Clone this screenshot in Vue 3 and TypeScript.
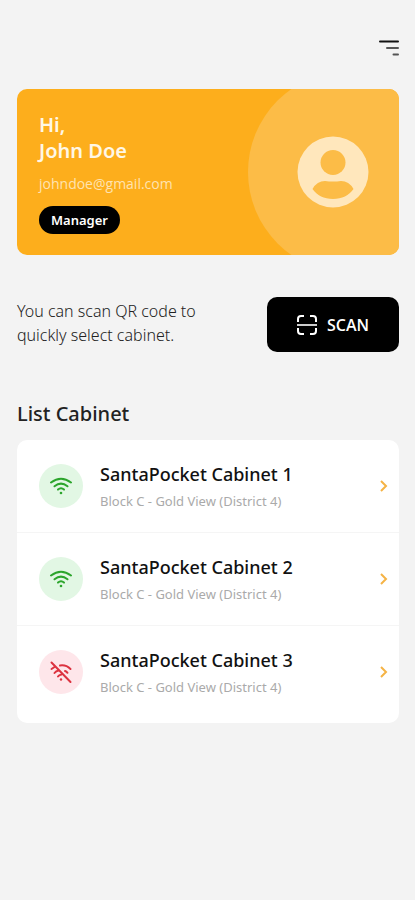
<script setup lang="ts">
interface Cabinet {
  id: number
  name: string
  location: string
  online: boolean
}

const user = { name: 'John Doe', email: 'johndoe@gmail.com', role: 'Manager' }

const cabinets: Cabinet[] = [
  { id: 1, name: 'SantaPocket Cabinet 1', location: 'Block C - Gold View (District 4)', online: true },
  { id: 2, name: 'SantaPocket Cabinet 2', location: 'Block C - Gold View (District 4)', online: true },
  { id: 3, name: 'SantaPocket Cabinet 3', location: 'Block C - Gold View (District 4)', online: false },
]
</script>

<template>
  <main class="page">
    <header class="topbar">
      <button class="menu" type="button" aria-label="Menu">
        <svg width="20" height="18" viewBox="0 0 20 18" fill="none" stroke-width="2" stroke-linecap="round">
          <path d="M1 2.5H19" stroke="#111" />
          <path d="M8 9H19" stroke="#555" />
          <path d="M14.500 15.500H19" stroke="#555" />
        </svg>
      </button>
    </header>

    <section class="profile">
      <div class="details">
        <h1 class="greeting">Hi,<br />{{ user.name }}</h1>
        <p class="email">{{ user.email }}</p>
        <span class="role">{{ user.role }}</span>
      </div>
      <div class="halo"></div>
      <svg class="avatar" width="72" height="72" viewBox="0 0 72 72" aria-hidden="true">
        <circle cx="36" cy="36" r="35.500" fill="#ffe7bc" />
        <circle cx="36" cy="26.500" r="12.500" fill="#fcbc47" />
        <path d="M15.500 53Q20 45 28 45Q36 46 44 45Q52 45 56.500 53C52 59.500 45 63 36 63S20 59.500 15.500 53Z" fill="#fcbc47" />
      </svg>
    </section>

    <section class="scan-row">
      <p class="hint">You can scan QR code to<br />quickly select cabinet.</p>
      <button class="scan" type="button">
        <svg width="20" height="20" viewBox="0 0 20 20" fill="none" stroke="#fff" stroke-width="2" aria-hidden="true">
          <path d="M1 7V4Q1 1 4 1H7M13 1H16Q19 1 19 4V7M1 13V16Q1 19 4 19H7M13 19H16Q19 19 19 16V13" />
          <path d="M0 10H20" stroke="#ccc" />
        </svg>
        <span>SCAN</span>
      </button>
    </section>

    <h2 class="heading">List Cabinet</h2>
    <ul class="list">
      <li v-for="cabinet in cabinets" :key="cabinet.id" class="item">
        <a class="link" href="#">
          <span class="status" :class="{ offline: !cabinet.online }">
            <svg v-if="cabinet.online" width="24" height="20" viewBox="0 0 24 20" fill="none" stroke="#2ca52c" stroke-width="2" stroke-linecap="round" aria-hidden="true">
              <path d="M2 6.500Q12-1 22 6.500" />
              <path d="M5.500 10.300Q12 5 18.500 10.300" />
              <path d="M9 13.600Q12 11 15 13.600" />
              <circle cx="12" cy="17" r="1.300" fill="#2ca52c" stroke="none" />
            </svg>
            <svg v-else width="24" height="24" viewBox="0 0 24 24" fill="none" stroke="#dc3340" stroke-width="2" stroke-linecap="round" aria-hidden="true">
              <path d="M2.500 2.500L21.500 22" />
              <path d="M11 5.500Q17 4.500 21.500 9" />
              <path d="M2.500 9L5.500 7M5.500 13Q7 11 9.500 10.500M16 11Q17.500 11.500 18.500 12.800M9 16.500Q10 15 12.500 14.500" />
              <circle cx="12" cy="19.500" r="1.200" fill="#dc3340" stroke="none" />
            </svg>
          </span>
          <span class="text">
            <span class="name">{{ cabinet.name }}</span>
            <span class="location">{{ cabinet.location }}</span>
          </span>
          <svg class="chevron" width="8" height="12" viewBox="0 0 8 12" fill="none" stroke="#f5b345" stroke-width="2" aria-hidden="true">
            <path d="M1 1L6 6L1 11" />
          </svg>
        </a>
      </li>
    </ul>
  </main>
</template>

<style>
body {
  background: #f3f3f3;
}
</style>

<style scoped>
.page {
  box-sizing: border-box;
  min-height: 100vh;
  padding: 36px 16px 24px 17px;
  background: #f3f3f3;
  color: #111;
  font-family: "Noto Sans", "Open Sans", sans-serif;
}

.topbar {
  display: flex;
  justify-content: flex-end;
}

.menu {
  display: flex;
  padding: 3px 0;
  border: 0;
  background: none;
}

.profile {
  position: relative;
  display: flex;
  align-items: center;
  justify-content: space-between;
  box-sizing: border-box;
  min-height: 166px;
  margin-top: 29px;
  padding: 0 30px 0 22px;
  overflow: hidden;
  border-radius: 10px;
  background: #fdae1c;
}

.details {
  padding: 23px 0 21px;
}

.halo {
  position: absolute;
  top: 50%;
  right: -51px;
  width: 202px;
  height: 202px;
  border-radius: 50%;
  background: #fcbc47;
  transform: translateY(-50%);
}

.avatar {
  position: relative;
  flex: none;
}

.greeting {
  margin: 0;
  color: #fff7e6;
  font-size: 20px;
  font-weight: 600;
  line-height: 26px;
}

.email {
  margin: 10px 0 12px;
  color: #ffe3b0;
  font-family: "Open Sans", "Noto Sans", sans-serif;
  font-size: 14px;
  line-height: 20px;
}

.role {
  display: inline-block;
  padding: 0 12px;
  border-radius: 14px;
  background: #000;
  color: #fff;
  font-size: 13px;
  font-weight: 600;
  line-height: 28px;
  vertical-align: top;
}

.scan-row {
  display: flex;
  align-items: center;
  justify-content: space-between;
  margin-top: 42px;
}

.hint {
  margin: 0;
  padding-bottom: 4px;
  color: #222;
  font-size: 16px;
  font-weight: 300;
  line-height: 24px;
}

.scan {
  display: flex;
  align-items: center;
  gap: 10px;
  height: 55px;
  padding: 0 30px;
  border: 0;
  border-radius: 10px;
  background: #000;
  color: #fff;
  font-family: "Open Sans", "Noto Sans", sans-serif;
  font-size: 16px;
  font-weight: 600;
}

.heading {
  margin: 48px 0 12px;
  color: #222;
  font-size: 20px;
  font-weight: 500;
  line-height: 28px;
}

.list {
  margin: 0;
  padding: 0 0 5px;
  border-radius: 10px;
  background: #fff;
  list-style: none;
}

.item + .item {
  border-top: 1px solid #f5f5f5;
}

.link {
  display: flex;
  align-items: center;
  min-height: 92px;
  padding: 0 11px 0 22px;
  color: inherit;
  text-decoration: none;
}

.status {
  display: flex;
  flex: none;
  align-items: center;
  justify-content: center;
  width: 44px;
  height: 44px;
  margin-right: 17px;
  border-radius: 50%;
  background: #e2f7e4;
}

.status.offline {
  background: #fee6ea;
}

.text {
  display: flex;
  flex: 1;
  flex-direction: column;
  gap: 4px;
}

.name {
  color: #111;
  font-size: 18px;
  font-weight: 500;
  line-height: 26px;
}

.location {
  color: #aaa;
  font-size: 13px;
  line-height: 20px;
}

.chevron {
  flex: none;
}
</style>
